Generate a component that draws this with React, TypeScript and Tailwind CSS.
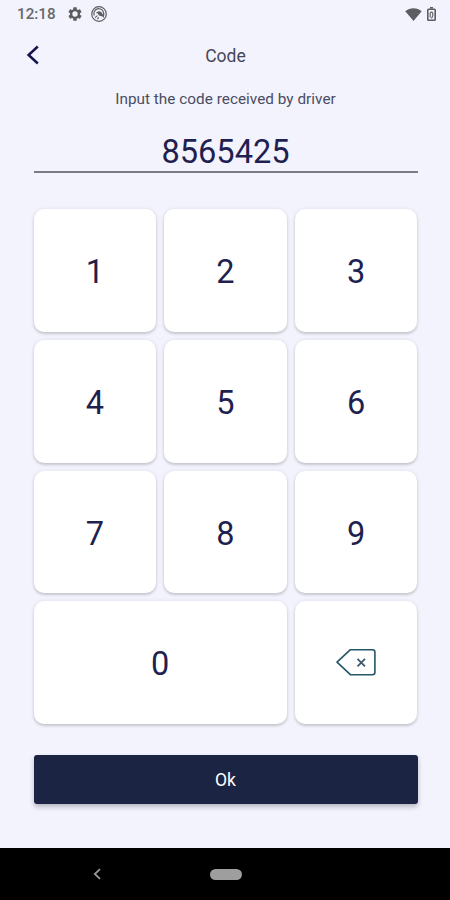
const KEYS = ["1", "2", "3", "4", "5", "6", "7", "8", "9", "0"];

function StatusBar() {
  return (
    <header className="flex h-7 items-center justify-between pr-[14px] pl-[17px] text-[#5c5d61]">
      <div className="flex items-center">
        <span className="w-[50px] text-[15.2px] leading-7 font-medium text-[#66676b]">
          12:18
        </span>
        <svg className="h-4 w-4" viewBox="0 0 24 24" fill="currentColor">
          <path d="M19.43 12.98c.04-.32.07-.64.07-.98s-.03-.66-.07-.98l2.11-1.65c.19-.15.24-.42.12-.64l-2-3.46c-.12-.22-.39-.3-.61-.22l-2.49 1c-.52-.4-1.08-.73-1.69-.98l-.38-2.65A.49.49 0 0 0 14 2h-4c-.25 0-.46.18-.49.42l-.38 2.65c-.61.25-1.17.59-1.69.98l-2.49-1c-.23-.09-.49 0-.61.22l-2 3.46c-.13.22-.07.49.12.64l2.11 1.65c-.04.32-.07.65-.07.98s.03.66.07.98l-2.11 1.65c-.19.15-.24.42-.12.64l2 3.46c.12.22.39.3.61.22l2.49-1c.52.4 1.08.73 1.69.98l.38 2.65c.03.24.24.42.49.42h4c.25 0 .46-.18.49-.42l.38-2.65c.61-.25 1.17-.59 1.69-.98l2.49 1c.23.09.49 0 .61-.22l2-3.46c.12-.22.07-.49-.12-.64l-2.11-1.65zM12 16a4 4 0 1 1 0-8 4 4 0 0 1 0 8z" />
        </svg>
        <svg
          className="ml-2 h-4 w-4"
          viewBox="0 0 16 16"
          fill="none"
          stroke="currentColor"
          strokeWidth="1.2"
        >
          <circle cx="8" cy="8" r="7.3" />
          <path d="M3.3 9.6A4.9 4.9 0 0 1 12.2 5.5Q13.3 7.6 12.4 10.2" />
          <path d="M5.5 7.2Q8 4.4 10.4 7.2L12.7 11.4M4 11.6l2.4-2M6.4 13l1.4-1.6" />
          <path d="M6.8 6.6l2.6-.2 1.2 3.2-2.2-.6z" fill="currentColor" />
        </svg>
      </div>
      <div className="flex items-center gap-[5px]">
        <svg className="h-[13px] w-[17px]" viewBox="0 0 17 13" fill="currentColor">
          <path d="M.3 3.2C4.9-.8 12.1-.8 16.7 3.2L8.5 13z" />
        </svg>
        <svg className="h-[14px] w-[9px]" viewBox="0 0 9 14" fill="none" stroke="currentColor">
          <path d="M3 .8h3" strokeWidth="1.6" />
          <rect x=".8" y="2.2" width="7.4" height="11" rx=".8" strokeWidth="1.6" />
          <path d="M3.2 10.6V6.2Q4.5 4 5.8 6.2V8.6L4.5 11.5" strokeWidth="1.1" />
        </svg>
      </div>
    </header>
  );
}

function BackspaceIcon() {
  return (
    <svg
      className="mb-[2px] h-7 w-10"
      viewBox="0 0 40 28"
      fill="none"
      stroke="#245568"
      strokeWidth="1.6"
      strokeLinejoin="round"
    >
      <path d="M14.4 1.7H36.4Q38.9 1.7 38.9 4.2V24.2Q38.9 26.7 36.4 26.7H14.4L1 14.2Z" />
      <path d="M21.5 10.8 29 18.3M29 10.8 21.5 18.3" stroke="#41596c" strokeWidth="1.8" />
    </svg>
  );
}

export default function App() {
  return (
    <div className="flex h-[900px] w-[450px] flex-col overflow-hidden bg-[#f2f3fc] font-[Roboto,sans-serif] text-[#1f1f50]">
      <StatusBar />

      <div className="grid h-14 grid-cols-[1fr_auto_1fr] items-center">
        <button className="-mt-[2px] ml-[25px] w-4 justify-self-start" aria-label="Back">
          <svg
            className="h-5 w-4"
            viewBox="0 0 16 20"
            fill="none"
            stroke="#14144a"
            strokeWidth="2.5"
          >
            <path d="M12.8 1.5 3.6 10l9.2 8.5" />
          </svg>
        </button>
        <h1 className="pl-px text-[17.5px] leading-6 text-[#46475a]">Code</h1>
      </div>

      <main className="flex flex-1 flex-col pr-[32.5px] pl-[33.5px]">
        <p className="mt-[5px] text-center text-[15.3px] leading-5 tracking-[0.03px] text-[#4b4c63]">
          Input the code received by driver
        </p>
        <div className="mt-[23px] h-[41px] border-b-2 border-[#7b7c82] text-center text-[32.6px] leading-[41px]">
          8565425
        </div>

        <div className="mt-[36px] grid h-[515px] grid-cols-3 grid-rows-4 gap-2">
          {KEYS.map((key) => (
            <button
              key={key}
              className={`rounded-[10px] bg-white pt-[4px] text-[32.5px] shadow-[0_2px_3px_rgba(0,0,0,0.16),0_0_4px_rgba(0,0,0,0.08)] ${
                key === "0" ? "col-span-2" : ""
              }`}
            >
              {key}
            </button>
          ))}
          <button
            className="flex items-center justify-center rounded-[10px] bg-white shadow-[0_2px_3px_rgba(0,0,0,0.16),0_0_4px_rgba(0,0,0,0.08)]"
            aria-label="Delete"
          >
            <BackspaceIcon />
          </button>
        </div>

        <button className="mt-[31px] h-[49px] rounded-[3px] bg-[#1c2444] pt-[2px] text-[17.5px] text-white shadow-[0_3px_5px_rgba(0,0,0,0.24)]">
          Ok
        </button>
      </main>

      <nav className="grid h-[52px] shrink-0 grid-cols-[1fr_auto_1fr] items-center bg-black">
        <svg
          className="ml-[92px] h-3 w-[10px]"
          viewBox="0 0 10 12"
          fill="none"
          stroke="#999999"
          strokeWidth="1.8"
        >
          <path d="M8 1.2 2.8 6 8 10.8" />
        </svg>
        <div className="ml-px h-[11px] w-8 rounded-full bg-[#9e9e9e]" />
      </nav>
    </div>
  );
}
